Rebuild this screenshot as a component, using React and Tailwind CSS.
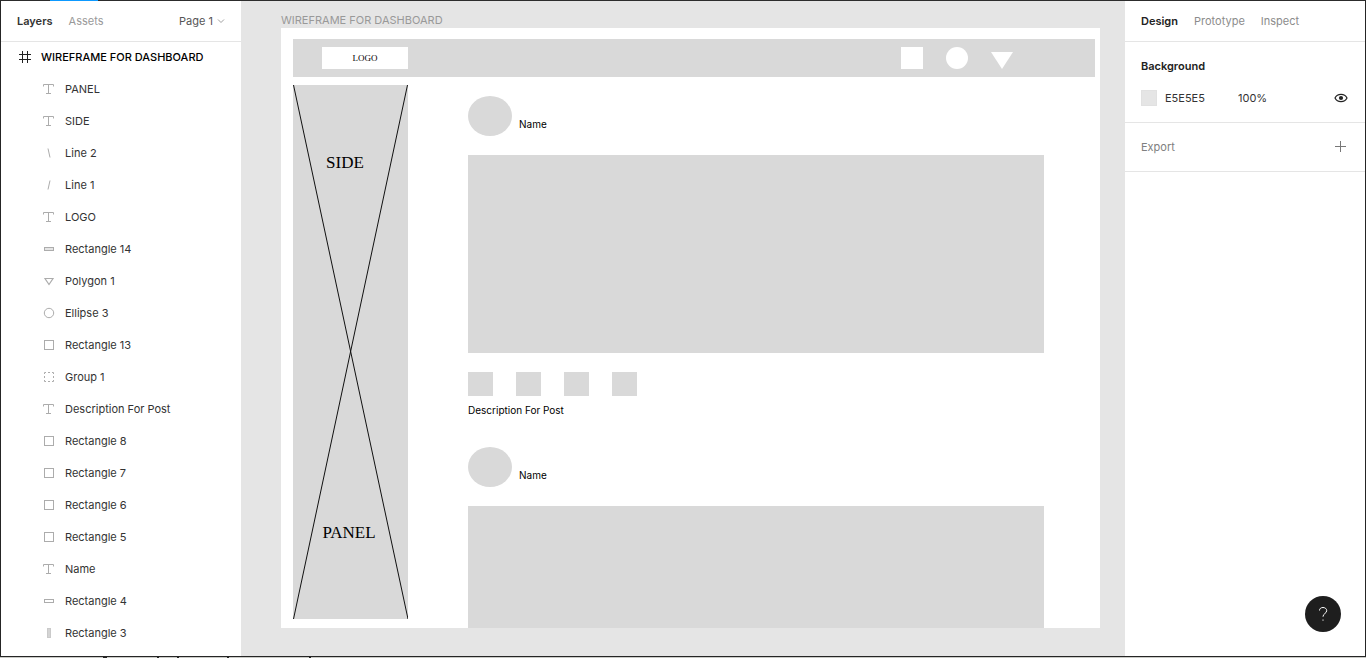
import React from "react";

const layers = [
  ["text", "PANEL"],
  ["text", "SIDE"],
  ["lineDown", "Line 2"],
  ["lineUp", "Line 1"],
  ["text", "LOGO"],
  ["wideFilled", "Rectangle 14"],
  ["polygon", "Polygon 1"],
  ["ellipse", "Ellipse 3"],
  ["square", "Rectangle 13"],
  ["group", "Group 1"],
  ["text", "Description For Post"],
  ["square", "Rectangle 8"],
  ["square", "Rectangle 7"],
  ["square", "Rectangle 6"],
  ["square", "Rectangle 5"],
  ["text", "Name"],
  ["wide", "Rectangle 4"],
  ["tall", "Rectangle 3"],
];

const shapes = {
  text: <path d="M.5 3.5V1.5h10v2M5.5 1.5v9M3 10.5h5" />,
  lineDown: <path d="M5 1.5l2 9" />,
  lineUp: <path d="M7 1.500l-2 9" />,
  wideFilled: <rect x="1.5" y="4.5" width="9" height="3" fill="#e5e5e5" />,
  wide: <rect x="1.5" y="4.5" width="9" height="3" />,
  tall: <rect x="4.5" y="1.5" width="3" height="9" fill="#d4d4d4" stroke="#cacaca" />,
  polygon: <path d="M2 3.500h8L6 9.500z" strokeWidth="1.2" />,
  ellipse: <circle cx="6" cy="6" r="4.7" />,
  square: <rect x="1.5" y="1.5" width="9" height="9" />,
  group: <path d="M1.5 3V1.500H3M5 1.500h2M9 1.500h1.500V3M10.500 5v2M10.500 9v1.500H9M7 10.500H5M3 10.500H1.500V9M1.500 7V5" />,
};

function LayerIcon({ kind }) {
  return (
    <svg className="size-3 shrink-0" viewBox="0 0 12 12" fill="none" stroke="#acacac" aria-hidden="true">
      {shapes[kind]}
    </svg>
  );
}

function LayersPanel() {
  return (
    <aside className="w-60 shrink-0 bg-white">
      <header className="flex h-10 items-center gap-4 pl-4 pr-4 shadow-[0_1px_0_#e5e5e5]">
        <button className="font-semibold text-[#333]">Layers</button>
        <button className="text-[#999]">Assets</button>
        <button className="ml-auto flex items-center gap-1 text-[#555]">
          Page 1
          <svg className="size-2" viewBox="0 0 8 8" fill="none" stroke="#a0a0a0" aria-hidden="true">
            <path d="M1 2.5l3 3 3-3" />
          </svg>
        </button>
      </header>
      <ul>
        <li>
          <button className="flex h-8 w-full items-center gap-2 pl-[18px] font-medium text-black">
            <svg className="mr-0.5 size-3 shrink-0" viewBox="0 0 12 12" fill="none" stroke="#222" aria-hidden="true">
              <path d="M3.5 0v12M8.5 0v12M0 3.5h12M0 8.5h12" />
            </svg>
            WIREFRAME FOR DASHBOARD
          </button>
        </li>
        {layers.map(([kind, name]) => (
          <li key={name}>
            <button className="flex h-8 w-full items-center gap-2.5 pl-[42px] text-[#333]">
              <LayerIcon kind={kind} />
              {name}
            </button>
          </li>
        ))}
      </ul>
    </aside>
  );
}

function Author() {
  return (
    <div className="flex h-10 items-center gap-[7px]">
      <span className="h-10 w-11 rounded-[50%] bg-[#d9d9d9]" />
      <span className="pt-4">Name</span>
    </div>
  );
}

function Canvas() {
  return (
    <main className="flex min-w-0 flex-1 flex-col bg-[#e5e5e5] pb-7 pl-10 pr-[25px] pt-3">
      <p className="h-[15px] leading-[15px] text-[#999]">WIREFRAME FOR DASHBOARD</p>
      <section className="flex flex-1 flex-col bg-white pl-3 pr-[5px] pt-[11px]">
        <div className="flex h-[38px] items-start bg-[#d9d9d9] pl-[29px] pr-[82px] pt-2">
          <span className="flex h-[22px] w-[86px] items-center justify-center bg-white font-['Liberation_Serif',serif] text-[9px] text-black">
            LOGO
          </span>
          <div className="ml-auto flex gap-[23px]">
            <span className="size-[22px] bg-white" />
            <span className="size-[22px] rounded-full bg-white" />
            <svg className="size-[22px]" viewBox="0 0 22 22" fill="#fff" aria-hidden="true">
              <path d="M0 5h22L11 22z" />
            </svg>
          </div>
        </div>
        <div className="flex flex-1 gap-[60px] pr-[51px]">
          <div className="mb-[9px] mt-2 grid w-[115px] shrink-0 bg-[#d9d9d9]">
            <svg className="col-start-1 row-start-1 size-full" viewBox="0 0 115 534" preserveAspectRatio="none" stroke="#111" aria-hidden="true">
              <path d="M.5 0L115 534M114.5 0L.5 534" />
            </svg>
            <div className="col-start-1 row-start-1 flex flex-col items-center justify-between pb-[74px] pl-px pr-3 pt-[66px] font-['Liberation_Serif',serif] text-[17px] leading-6 text-black">
              <span>SIDE</span>
              <span className="-mr-2">PANEL</span>
            </div>
          </div>
          <div className="flex flex-1 flex-col pt-[19px] text-[10px] leading-4 text-black">
            <Author />
            <div className="mt-[19px] h-[198px] bg-[#d9d9d9]" />
            <div className="mt-[19px] flex gap-[23px]">
              <span className="h-6 w-[25px] bg-[#d9d9d9]" />
              <span className="h-6 w-[25px] bg-[#d9d9d9]" />
              <span className="h-6 w-[25px] bg-[#d9d9d9]" />
              <span className="h-6 w-[25px] bg-[#d9d9d9]" />
            </div>
            <p className="mb-[29px] mt-1.5">Description For Post</p>
            <Author />
            <div className="mt-[19px] flex-1 bg-[#d9d9d9]" />
          </div>
        </div>
      </section>
    </main>
  );
}

function DesignPanel() {
  return (
    <aside className="flex w-60 shrink-0 flex-col bg-white">
      <header className="flex h-10 items-center gap-4 px-4 shadow-[0_1px_0_#e5e5e5]">
        <button className="font-semibold text-[#222]">Design</button>
        <button className="text-[#8c8c8c]">Prototype</button>
        <button className="text-[#8c8c8c]">Inspect</button>
      </header>
      <section className="flex h-[82px] flex-col border-b border-[#e5e5e5] px-4 pt-[9px]">
        <h2 className="flex h-8 items-center font-semibold text-[#222]">Background</h2>
        <div className="flex h-8 items-center gap-2">
          <span className="size-4 border border-[#e1e1e1] bg-[#e5e5e5]" />
          <input aria-label="Background colour" defaultValue="E5E5E5" className="w-[65px] text-[#333] outline-none" />
          <input aria-label="Opacity" defaultValue="100%" className="w-10 text-[#333] outline-none" />
          <button aria-label="Toggle visibility" className="ml-auto">
            <svg className="h-3 w-4" viewBox="0 0 16 12" fill="none" stroke="#222" strokeWidth="1.2" aria-hidden="true">
              <path d="M2 6c2.400-4.800 9.600-4.800 12 0-2.400 4.800-9.600 4.800-12 0z" />
              <circle cx="8" cy="6" r="2.1" fill="#222" stroke="none" />
            </svg>
          </button>
        </div>
      </section>
      <section className="flex h-[49px] items-center justify-between border-b border-[#e5e5e5] px-4">
        <h2 className="text-[#808080]">Export</h2>
        <button aria-label="Add export" className="mr-0.5">
          <svg className="size-3" viewBox="0 0 12 12" fill="none" stroke="#777" aria-hidden="true">
            <path d="M5.5 0v11M0 5.5h11" />
          </svg>
        </button>
      </section>
      <button aria-label="Help" className="mb-6 ml-auto mr-6 mt-auto flex size-9 items-center justify-center rounded-full bg-[#1e1e1e]">
        <svg className="h-4 w-3" viewBox="0 0 12 16" fill="none" stroke="#fff" aria-hidden="true">
          <path d="M2.5 4.5C2.5 2.5 4 1.5 6 1.5s3.700 1.200 3.700 3.200c0 2.800-3.700 2.800-3.700 6M6 13.500v1.200" />
        </svg>
      </button>
    </aside>
  );
}

export default function App() {
  return (
    <div className="relative flex min-h-screen flex-col bg-[#c9cac6] font-[Inter,sans-serif] text-[11px] leading-4">
      <div className="absolute left-[50px] top-0 h-px w-12 bg-[#0d99ff]" />
      <div className="flex flex-1 border border-[#252525] border-t-[#2c2c2c]">
        <LayersPanel />
        <Canvas />
        <DesignPanel />
      </div>
      <svg className="h-px w-full" aria-hidden="true" fill="#222">
        <path d="M103 0h4v1h-4zM157 0h2v1h-2zM177 0h2v1h-2zM227 0h2v1h-2zM309 0h2v1h-2z" />
      </svg>
    </div>
  );
}
